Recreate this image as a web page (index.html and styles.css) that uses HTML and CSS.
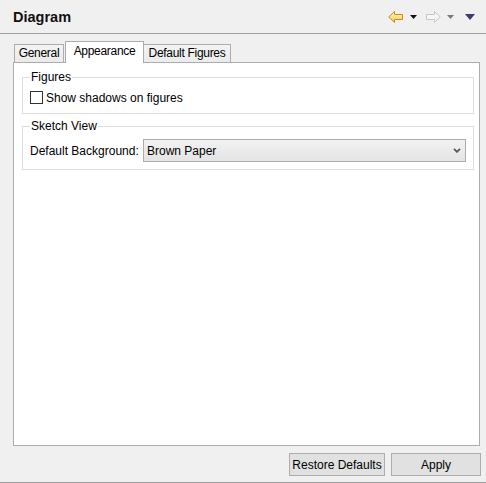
FILE: index.html
```html
<!DOCTYPE html>
<html lang="en">
<head>
<meta charset="utf-8">
<title>Diagram</title>
<link rel="stylesheet" href="styles.css">
</head>
<body>
<div class="window">
  <header class="header">
    <h1 class="title">Diagram</h1>
    <div class="toolbar">
      <svg class="arrow back" width="15" height="12" viewBox="0 0 15 12">
        <defs>
          <linearGradient id="yg" x1="0" y1="0" x2="0" y2="1">
            <stop offset="0" stop-color="#fff6cf"/>
            <stop offset="1" stop-color="#f7c84c"/>
          </linearGradient>
        </defs>
        <polygon points="0.7,6 6.5,0.5 6.5,3.5 14.5,3.5 14.5,8.5 6.5,8.5 6.5,11.5" fill="url(#yg)" stroke="#c98a18" stroke-width="1" stroke-linejoin="miter"/>
      </svg>
      <svg class="tri tri-black" width="7" height="4" viewBox="0 0 7 4"><polygon points="0,0 7,0 3.5,4" fill="#111"/></svg>
      <svg class="arrow fwd" width="15" height="12" viewBox="0 0 15 12">
        <polygon points="14.3,6 8.5,0.5 8.5,3.5 0.5,3.5 0.5,8.5 8.5,8.5 8.5,11.5" fill="#f6f6f6" stroke="#c6c6c6" stroke-width="1"/>
      </svg>
      <svg class="tri tri-grey" width="7" height="4" viewBox="0 0 7 4"><polygon points="0,0 7,0 3.5,4" fill="#7a7a7a"/></svg>
      <svg class="tri tri-menu" width="10" height="6" viewBox="0 0 10 6"><polygon points="0,0 10,0 5,6" fill="#3c3a72"/></svg>
    </div>
  </header>
  <div class="content">
    <div class="tabs">
      <div class="tab tab-general">General</div>
      <div class="tab tab-active">Appearance</div>
      <div class="tab tab-figures">Default Figures</div>
    </div>
    <div class="panel">
      <fieldset class="group">
        <legend class="legend">Figures</legend>
        <label class="check-row"><span class="checkbox"></span><span class="check-label">Show shadows on figures</span></label>
      </fieldset>
      <fieldset class="group group-sketch">
        <legend class="legend">Sketch View</legend>
        <div class="field-row">
          <span class="field-label">Default Background:</span>
          <div class="select">
            <span class="select-value">Brown Paper</span>
            <svg class="chevron" width="8" height="5" viewBox="0 0 8 5"><polyline points="1,0.8 4,3.8 7,0.8" fill="none" stroke="#555" stroke-width="1.8"/></svg>
          </div>
        </div>
      </fieldset>
    </div>
    <div class="buttons">
      <button class="btn btn-restore">Restore Defaults</button>
      <button class="btn btn-apply">Apply</button>
    </div>
  </div>
</div>
</body>
</html>
```

FILE: styles.css
```css
html, body {
  margin: 0;
  padding: 0;
}

body {
  width: 486px;
  height: 483px;
  overflow: hidden;
  background: #f0f0f0;
  font-family: "Liberation Sans", Arial, sans-serif;
  font-size: 12px;
  color: #000;
}

.window {
  height: 483px;
  box-sizing: border-box;
  border-bottom: 1px solid #a0a0a0;
  display: flex;
  flex-direction: column;
}

.header {
  height: 33px;
  border-bottom: 1px solid #a0a0a0;
  display: flex;
  align-items: center;
  padding: 0 11px 0 13px;
}

.title {
  flex: 1;
  margin: 0;
  font-size: 14.5px;
  font-weight: bold;
  color: #111;
  line-height: 18px;
}

.toolbar {
  display: flex;
  align-items: center;
}

.toolbar svg {
  display: block;
}

.tri-black {
  margin-left: 7px;
}

.fwd {
  margin-left: 9px;
}

.tri-grey {
  margin-left: 6px;
}

.tri-menu {
  margin-left: 11px;
}

.content {
  flex: 1;
  display: flex;
  flex-direction: column;
  padding: 0 6px 0 13px;
}

.tabs {
  height: 28px;
  display: flex;
  align-items: flex-end;
  padding-left: 1px;
}

.tab {
  box-sizing: border-box;
  height: 18px;
  border: 1px solid #adadad;
  border-bottom: none;
  background: linear-gradient(#f3f3f3, #ebebeb);
  text-align: center;
  line-height: 17px;
  color: #000;
  letter-spacing: -0.3px;
  white-space: nowrap;
}

.tab-general {
  width: 50px;
}

.tab-active {
  width: 79px;
  height: 22px;
  margin-left: 1px;
  margin-bottom: -1px;
  background: #fff;
  z-index: 1;
  line-height: 19px;
}

.tab-figures {
  width: 88px;
  margin-left: -1px;
}

.panel {
  height: 384px;
  box-sizing: border-box;
  border: 1px solid #adadad;
  background: #fff;
  padding: 7px 5px 0 8px;
}

.group {
  margin: 0;
  padding: 0 7px 9px;
  border: 1px solid #dcdcdc;
  min-width: 0;
}

.group-sketch {
  margin-top: 5px;
  padding-bottom: 7px;
}

.legend {
  padding: 0 1px;
  line-height: 14px;
}

.check-row {
  display: flex;
  align-items: center;
  height: 13px;
  margin-top: 7px;
}

.checkbox {
  box-sizing: border-box;
  width: 13px;
  height: 13px;
  border: 1px solid #333;
  background: #fff;
}

.check-label {
  margin-left: 3px;
}

.field-row {
  display: flex;
  align-items: center;
  margin-top: 6px;
}

.field-label {
  flex: 0 0 113px;
}

.select {
  flex: 1;
  box-sizing: border-box;
  height: 23px;
  border: 1px solid #acacac;
  background: linear-gradient(#f2f2f2, #e4e4e4);
  display: flex;
  align-items: center;
  justify-content: space-between;
  padding: 0 4px 0 3px;
}

.chevron {
  display: block;
}

.buttons {
  display: flex;
  justify-content: flex-end;
  gap: 6px;
  margin-top: 7px;
  margin-right: -1px;
}

.btn {
  box-sizing: border-box;
  height: 23px;
  border: 1px solid #adadad;
  background: #e1e1e1;
  font-family: "Liberation Sans", Arial, sans-serif;
  font-size: 12px;
  color: #000;
  padding: 0;
}

.btn-restore {
  width: 96px;
}

.btn-apply {
  width: 90px;
}
```
